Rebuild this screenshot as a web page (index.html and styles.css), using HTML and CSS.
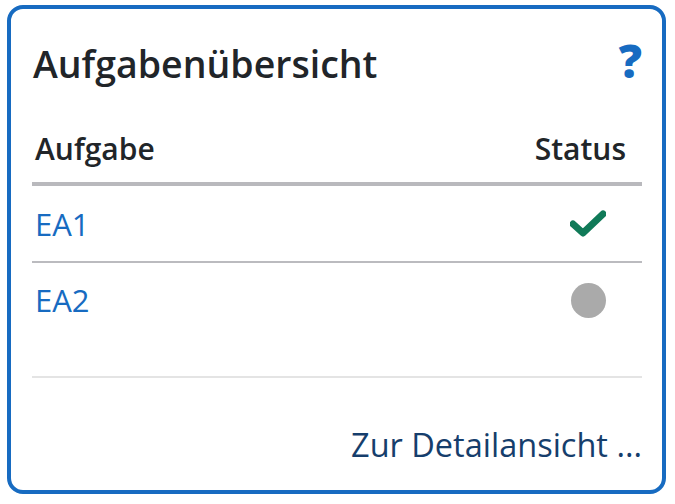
FILE: index.html
```html
<!DOCTYPE html>
<html lang="de">
<head>
  <meta charset="UTF-8">
  <meta name="viewport" content="width=device-width, initial-scale=1.0">
  <title>Aufgabenübersicht</title>
  <link rel="stylesheet" href="styles.css">
</head>
<body>
  <div class="card">
    <div class="card-head">
      <h2 class="card-title">Aufgabenübersicht</h2>
      <a class="help" href="#" title="Hilfe">?</a>
    </div>

    <div class="task-table">
      <div class="task-row task-row-head">
        <div>Aufgabe</div>
        <div>Status</div>
      </div>
      <div class="task-row">
        <div><a href="#">EA1</a></div>
        <div class="status">
          <svg width="36" height="27" viewBox="0 0 36 27">
            <path d="M3 14 L13 23 L33 4" fill="none" stroke="#107a58" stroke-width="7" stroke-linecap="round" stroke-linejoin="round"/>
          </svg>
        </div>
      </div>
      <div class="task-row">
        <div><a href="#">EA2</a></div>
        <div class="status"><span class="dot"></span></div>
      </div>
    </div>

    <div class="card-foot">
      <a href="#">Zur Detailansicht ...</a>
    </div>
  </div>
</body>
</html>
```

FILE: styles.css
```css
* {
  margin: 0;
  padding: 0;
  box-sizing: border-box;
  font-family: "Open Sans", "Noto Sans", sans-serif;
}

body {
  background-color: #fff;
  padding: 5px 9px 10px 7px;
}

.card {
  height: 489px;
  border: 4px solid #176bc1;
  border-radius: 16px;
  padding: 0 20px 0 21px;
  display: flex;
  flex-direction: column;
}

.card-head {
  display: flex;
  justify-content: space-between;
  align-items: center;
  height: 114px;
  padding-bottom: 6px;
}

.card-title {
  font-size: 37.5px;
  font-weight: 600;
  color: #212529;
  padding-left: 1px;
}

.help {
  font-size: 46px;
  font-weight: 800;
  color: #176bc1;
  text-decoration: none;
  line-height: 1;
  padding-bottom: 6px;
}

.task-table {
  border-bottom: 2px solid #e4e4e4;
  height: 255px;
}

.task-row {
  display: flex;
  justify-content: space-between;
  align-items: center;
  height: 76px;
  border-top: 2px solid #bbbbbf;
  font-size: 31px;
}

.task-row-head {
  height: 63px;
  border-top: none;
  border-bottom: 4px solid #b9b9bd;
  font-size: 30px;
  font-weight: 600;
  color: #212529;
  padding: 0 16px 8px 3px;
}

.task-row-head + .task-row {
  height: 75px;
  border-top: none;
}

.task-row a {
  color: #176bc1;
  text-decoration: none;
  padding-left: 3px;
}

.status {
  width: 36px;
  margin-right: 36px;
  display: flex;
  justify-content: center;
}

.dot {
  width: 35px;
  height: 35px;
  border-radius: 50%;
  background-color: #aaaaaa;
}

.card-foot {
  flex: 1;
  display: flex;
  justify-content: flex-end;
  align-items: center;
  padding-top: 20px;
}

.card-foot a {
  font-size: 32.5px;
  color: #163e6c;
  text-decoration: none;
}
```
